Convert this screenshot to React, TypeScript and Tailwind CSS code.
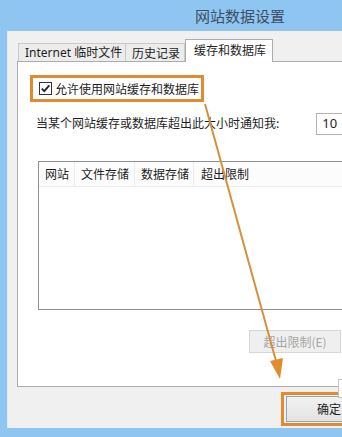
import React from "react";

export default function App() {
  const cjk = "font-['Noto_Sans_CJK_SC','Noto_Sans',sans-serif]";
  return (
    <div className={`relative w-[342px] h-[437px] overflow-hidden bg-[#8fc6f1] ${cjk} text-[#1e1e1e]`}>
      <div className="h-[31px] flex items-center pl-[195px] text-[15px] text-[#3c4f66] leading-none">
        网站数据设置
      </div>
      <div className="ml-[7px] w-[345px] h-[397px] bg-[#f0f0f0] pt-[8px] pl-[9px] flex flex-col border-l border-[#dfe9f3]">
        {/* tabs */}
        <div className="flex items-start h-[23px] text-[12px] leading-none">
          <div className="mt-[4px] ml-[1px] h-[18px] w-[108px] border border-b-0 border-[#c9c9c9] bg-[#ececec] flex items-center pl-[6px] font-['Noto_Sans','Noto_Sans_CJK_SC',sans-serif]">
            Internet 临时文件
          </div>
          <div className="mt-[4px] h-[18px] w-[59px] border border-l-0 border-b-0 border-[#c9c9c9] bg-[#ececec] flex items-center pl-[6px]">
            历史记录
          </div>
          <div className="relative z-10 h-[23px] w-[88px] border border-b-0 border-[#adadad] bg-white flex items-center pl-[8px] pb-[3px]">
            缓存和数据库
          </div>
        </div>
        {/* panel */}
        <div className="-mt-px w-[340px] h-[326px] border border-[#adadad] bg-white pt-[13px] pl-[12px] flex flex-col text-[12px]">
          <div className="flex h-[27px] w-[174px] items-center border-[3px] border-[#e08c2e] pl-[6px]">
            <div className="w-[13px] h-[13px] border border-[#333] bg-white flex items-center justify-center">
              <svg width="11" height="11" viewBox="0 0 11 11">
                <path d="M1.8 5.6 L4.3 8.2 L9.3 2.4" fill="none" stroke="#222" strokeWidth="1.8" />
              </svg>
            </div>
            <span className="ml-[3px] leading-none">允许使用网站缓存和数据库</span>
          </div>
          <div className="mt-[11px] flex items-start">
            <div className="ml-[6px] w-[282px] pt-[2px] leading-[16px]">当某个网站缓存或数据库超出此大小时通知我:</div>
            <div className="w-[40px] h-[22px] border border-[#b4b4b4] bg-white pl-[5px] flex items-center text-[13px] font-['Noto_Sans',sans-serif]">
              10
            </div>
          </div>
          <div className="mt-[26px] ml-[8px] w-[320px] h-[149px] border border-[#8f8f8f] bg-white">
            <div className="flex h-[25px] border-b border-[#ececec] bg-[#fcfcfc] leading-none">
              <div className="w-[36px] h-full flex items-center pl-[6px] border-r border-[#ececec]">网站</div>
              <div className="w-[60px] h-full flex items-center pl-[6px] border-r border-[#ececec]">文件存储</div>
              <div className="w-[59px] h-full flex items-center pl-[6px] border-r border-[#ececec]">数据存储</div>
              <div className="w-[70px] h-full flex items-center pl-[7px]">超出限制</div>
            </div>
          </div>
          <div className="mt-[20px] ml-[219px] w-[92px] h-[23px] border border-[#d6d6d6] bg-[#efefef] text-[#a6a6a6] flex items-center justify-center leading-none">
            超出限制(E)
          </div>
        </div>
        {/* bottom buttons */}
        <div className="mt-[5px] ml-[264px] w-[80px] h-[34px] border-[3px] border-[#e08c2e] pl-[2px] py-[1px]">
          <div className="w-[78px] h-full border border-[#8fa5c4] bg-gradient-to-b from-[#f2f2f2] to-[#e3e3e3] flex items-center pl-[30px] text-[12px] leading-none">
            确定
          </div>
        </div>
      </div>
      {/* small partial element at right edge */}
      <div className="absolute left-[338px] top-[379px] w-[10px] h-[19px] border border-[#c4c4c4] bg-white" />
      {/* arrow */}
      <svg className="absolute left-0 top-0" width="342" height="437" viewBox="0 0 342 437">
        <line x1="205" y1="104" x2="276" y2="361" stroke="#d4913c" strokeWidth="2" />
        <polygon points="270,361 283,358 280,379" fill="#e08c2e" />
      </svg>
    </div>
  );
}
